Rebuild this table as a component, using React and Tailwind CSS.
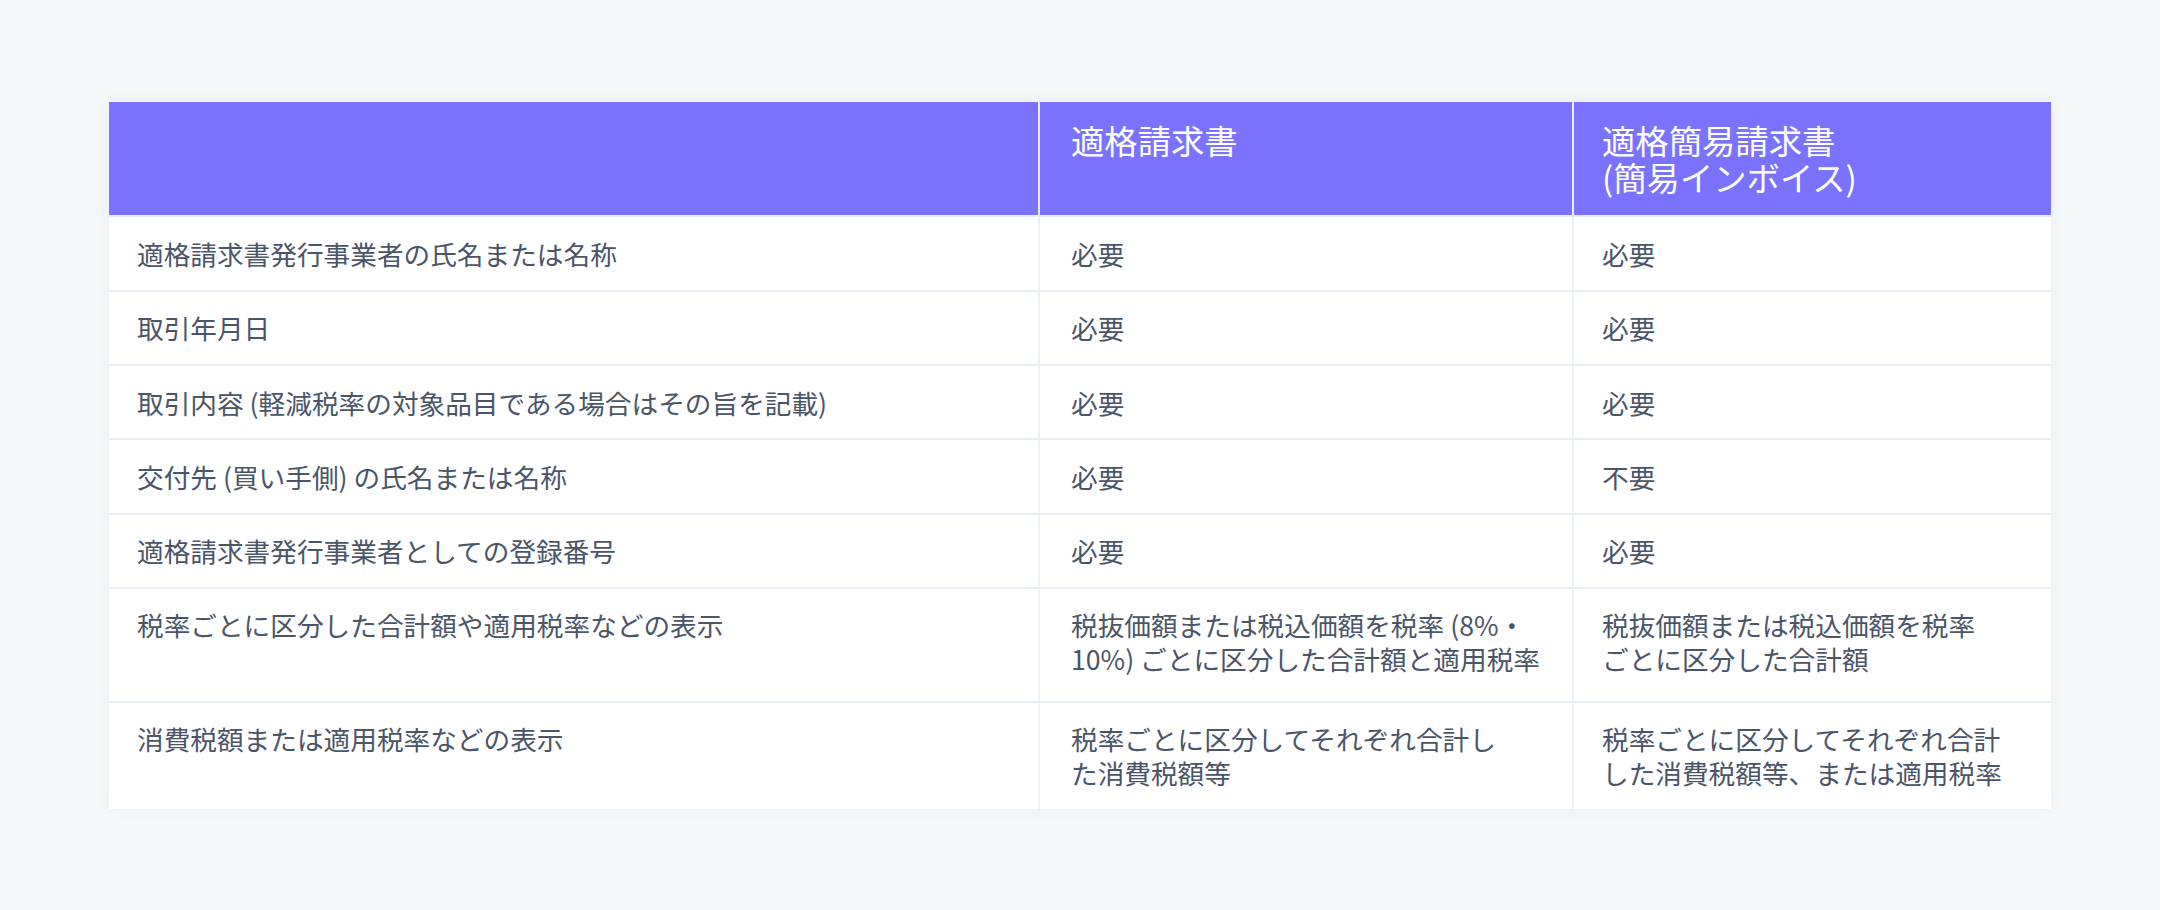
const rows = [
  { label: '適格請求書発行事業者の氏名または名称', a: ['必要'], b: ['必要'] },
  { label: '取引年月日', a: ['必要'], b: ['必要'] },
  { label: '取引内容 (軽減税率の対象品目である場合はその旨を記載)', a: ['必要'], b: ['必要'] },
  { label: '交付先 (買い手側) の氏名または名称', a: ['必要'], b: ['不要'] },
  { label: '適格請求書発行事業者としての登録番号', a: ['必要'], b: ['必要'] },
  {
    label: '税率ごとに区分した合計額や適用税率などの表示',
    a: ['税抜価額または税込価額を税率 (8%・', '10%) ごとに区分した合計額と適用税率'],
    b: ['税抜価額または税込価額を税率', 'ごとに区分した合計額'],
    tall: true,
  },
  {
    label: '消費税額または適用税率などの表示',
    a: ['税率ごとに区分してそれぞれ合計し', 'た消費税額等'],
    b: ['税率ごとに区分してそれぞれ合計', 'した消費税額等、または適用税率'],
  },
]

function Lines({ lines }) {
  return lines.map((line, i) => (
    <div key={i} className="whitespace-nowrap">{line}</div>
  ))
}

export default function App() {
  return (
    <div
      className="min-h-screen bg-[#f5f8fb] pt-[102px] pb-[102px]"
      style={{ fontFamily: '"Noto Sans CJK JP", "Noto Sans", sans-serif' }}
    >
      <div className="mx-auto w-[1942px] bg-white shadow-[0_0_14px_rgba(30,41,59,0.05)]">
        <div className="grid grid-cols-[929px_534px_479px] bg-[#7b73ff] text-white text-[33.33px] leading-[36.67px]">
          <div className="py-[20px] pl-[28px]" />
          <div className="py-[20px] pl-[31px] border-l-2 border-[#eeeeff]">適格請求書</div>
          <div className="py-[20px] pl-[28px] border-l-2 border-[#eeeeff]">
            <div>適格簡易請求書</div>
            <div>(簡易インボイス)</div>
          </div>
        </div>

        {rows.map((row, i) => (
          <div
            key={i}
            className={`grid grid-cols-[929px_534px_479px] border-t-2 border-[#e8eef6] text-[#4a5568] text-[26.67px] leading-[33.33px] ${
              row.tall ? 'h-[114px]' : ''
            }`}
          >
            <div className="py-[19.5px] pl-[28px] whitespace-nowrap">{row.label}</div>
            <div className="py-[19.5px] pl-[31px] border-l-2 border-[#eef1f7]">
              <Lines lines={row.a} />
            </div>
            <div className="py-[19.5px] pl-[28px] border-l-2 border-[#eef1f7]">
              <Lines lines={row.b} />
            </div>
          </div>
        ))}
      </div>
    </div>
  )
}
